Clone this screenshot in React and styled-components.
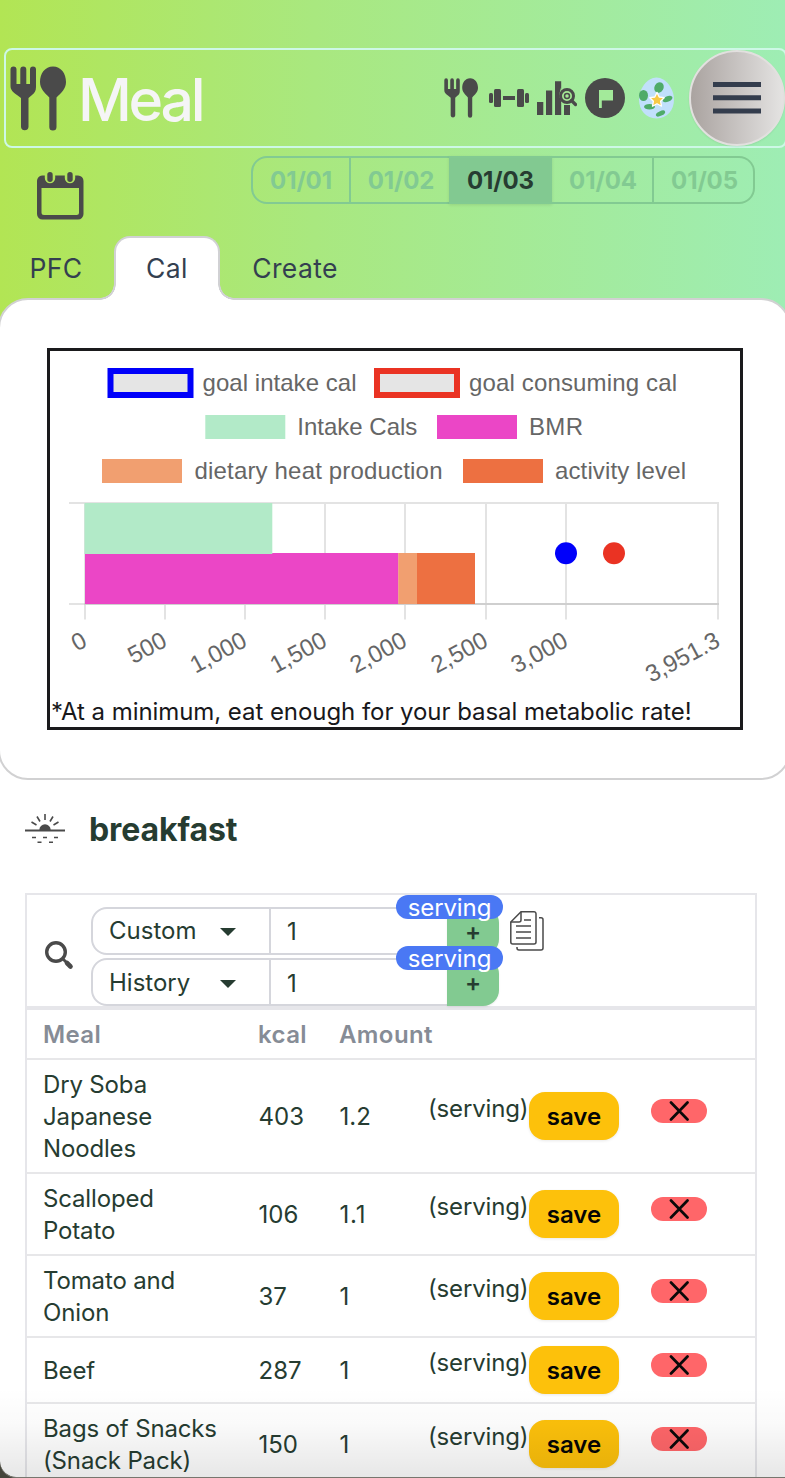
import React from "react";
import styled, { createGlobalStyle } from "styled-components";

const GlobalStyle = createGlobalStyle`
  *, *::before, *::after { box-sizing: border-box; }
  html, body { margin: 0; padding: 0; background: #fff; }
  body { font-family: Inter, "Liberation Sans", sans-serif; }
  button, input { font: inherit; margin: 0; border: 0; padding: 0; }
  svg { display: block; flex: none; }
`;

const INK = "#263c31";
const ICON = "#4a4a4a";

const Page = styled.main`
  position: relative;
  width: 785px;
  height: 1478px;
  overflow: hidden;
  background: #fff;
  color: ${INK};
  font-size: 24px;
  line-height: 32px;
`;

const Hero = styled.div`
  height: 350px;
  padding-top: 48px;
  background: linear-gradient(to right, #b2e554 0%, #a9e87f 40%, #9eedb4 100%);
`;

const Header = styled.header`
  display: flex;
  align-items: center;
  width: 783px;
  height: 100px;
  margin-left: 4px;
  padding-left: 4px;
  border: 2px solid #cdf8e6;
  border-radius: 8px;
`;

const Title = styled.h1`
  flex: 1;
  margin: 3px 0 0 12px;
  color: #f5f5f6;
  font-size: 59px;
  font-weight: 500;
  line-height: 60px;
  letter-spacing: -3.3px;
`;

const IconNav = styled.nav`
  display: flex;
  align-items: center;
  gap: 8px;
  margin-right: 12px;

  & > :first-child {
    margin-right: 3px;
  }
`;

const MenuButton = styled.button`
  display: grid;
  place-items: center;
  width: 96px;
  height: 96px;
  border: 2px solid #e2e0df;
  border-radius: 50%;
  background: linear-gradient(to right, #aaa3a0, #e4e3e2);
  box-shadow: 0 1px 2px rgba(0, 0, 0, 0.08);
`;

const DateBar = styled.div`
  display: flex;
  justify-content: space-between;
  padding: 8px 30px 0 36px;
  height: 88px;
`;

const CalendarSlot = styled.div`
  padding-top: 15px;
`;

const Dates = styled.div`
  display: flex;
  height: 48px;
`;

const DateButton = styled.button`
  width: ${(p) => p.$width}px;
  height: 48px;
  padding: 2px 0 0 ${(p) => (p.$first ? 0 : 2)}px;
  border: 2px solid #82ca92;
  border-left-width: ${(p) => (p.$first ? 2 : 0)}px;
  border-right-width: ${(p) => (p.$flush ? 0 : 2)}px;
  border-radius: ${(p) => (p.$first ? "16px 0 0 16px" : p.$last ? "0 16px 16px 0" : 0)};
  background: ${(p) => (p.$active ? "#82c991" : "transparent")};
  box-shadow: ${(p) => (p.$active ? "0 1px 3px rgba(0,0,0,.1)" : "none")};
  color: ${(p) => (p.$active ? INK : "#82ca92")};
  font-weight: 650;
  letter-spacing: -0.1px;
  text-align: center;
`;

const Tabs = styled.div`
  position: relative;
  z-index: 1;
  display: flex;
  height: 64px;
`;

const Tab = styled.button`
  position: relative;
  width: ${(p) => p.$width}px;
  height: 64px;
  border: ${(p) => (p.$active ? "2px solid #d1d1d4" : "0")};
  border-bottom: 0;
  border-radius: 16px 16px 0 0;
  background: ${(p) => (p.$active ? "#fff" : "transparent")};
  color: #343f50;
  font-size: 26.5px;
  letter-spacing: 0.4px;
  padding: ${(p) => (p.$active ? "0 0 2px" : "0 2px 1px 0")};

  &::before,
  &::after {
    content: "";
    display: ${(p) => (p.$active ? "block" : "none")};
    position: absolute;
    bottom: 0;
    width: 16px;
    height: 16px;
  }
  &::before {
    left: -16px;
    background: radial-gradient(circle at 0 0, transparent 13.5px, #d1d1d4 14px, #d1d1d4 15.5px, #fff 16px);
  }
  &::after {
    right: -16px;
    background: radial-gradient(circle at 100% 0, transparent 13.5px, #d1d1d4 14px, #d1d1d4 15.5px, #fff 16px);
  }
`;

const Panel = styled.section`
  width: 793px;
  height: 482px;
  margin: -52px 0 0 -2px;
  padding: 48px 0 0 47px;
  border: 2px solid #d1d1d2;
  border-radius: 30px;
  background: #fff;
`;

const ChartFrame = styled.div`
  width: 696px;
  height: 382px;
  border: 3px solid #1a1a1c;
  background: #fff;
`;

const ChartNote = styled.p`
  margin: 0 0 0 1px;
  color: #18181b;
  white-space: nowrap;
  letter-spacing: -0.06px;
`;

const MealHeading = styled.div`
  display: flex;
  align-items: center;
  gap: 24px;
  height: 98px;
  padding: 0 0 0 25px;
`;

const MealTitle = styled.h2`
  margin: 1px 0 0;
  font-size: 32px;
  font-weight: 700;
  line-height: 40px;
  letter-spacing: -0.1px;
`;

const MealCard = styled.section`
  width: 732px;
  margin: 15px 0 0 25px;
  border: 2px solid #e6e6ea;
`;

const AddArea = styled.div`
  display: flex;
  height: 115px;
  padding-top: 12px;
  border-bottom: 4px solid #e6e6ea;
`;

const SearchSlot = styled.div`
  width: 64px;
  padding: 34px 0 0 18px;
`;

const JoinStack = styled.div`
  display: flex;
  flex-direction: column;
  gap: 3px;
  width: 408px;
`;

const Join = styled.div`
  position: relative;
  display: flex;
  height: 48px;
`;

const Select = styled.div`
  display: flex;
  align-items: center;
  justify-content: space-between;
  width: 180px;
  padding: ${(p) => p.$drop}px 33px 0 16px;
  border: 2px solid #d5d6dc;
  border-radius: 16px 0 0 16px;
`;

const Caret = styled.span`
  border: 8px solid transparent;
  border-top-color: ${INK};
  border-bottom: 0;
  margin-top: 2px;
`;

const CountInput = styled.input`
  width: 176px;
  height: 48px;
  padding: ${(p) => p.$drop}px 0 0 16px;
  border: solid #d5d6dc;
  border-width: 2px 0;
  background: #fff;
  color: ${INK};
  outline: 0;
`;

const PlusButton = styled.button`
  width: 52px;
  height: 48px;
  border-radius: 0 16px 16px 0;
  background: #82ca91;
  color: ${INK};
  font-weight: 600;
  line-height: 20px;
  padding-top: 1px;
  box-shadow: 0 1px 2px rgba(0, 0, 0, 0.08);
`;

const UnitBadge = styled.span`
  position: absolute;
  top: -12px;
  right: -4px;
  width: 107px;
  height: 24px;
  border-radius: 12px;
  background: #4a78f4;
  color: #fff;
  line-height: 26px;
  letter-spacing: -0.1px;
  text-align: center;
`;

const CopySlot = styled.div`
  padding: 4px 0 0 11px;
`;

const TableRow = styled.div`
  display: grid;
  grid-template-columns: 215px 81px 89px 101px 122px 1fr;
  align-items: center;
  height: ${(p) => p.$height}px;
  padding-left: 16px;
  border-bottom: 2px solid #e7e7e9;
`;

const HeadCell = styled.span`
  padding-top: 2px;
  color: #868c96;
  font-weight: 600;
  letter-spacing: 0.4px;
`;

const Cell = styled.span`
  letter-spacing: -0.15px;
  padding-top: 1px;
`;

const NumberCell = styled(Cell)`
  padding-left: 0.5px;
  letter-spacing: ${(p) => p.$spacing || 0}px;
`;

const NameLine = styled.span`
  display: block;
  white-space: nowrap;
`;

const Unit = styled.span`
  padding-bottom: 15px;
  white-space: nowrap;
  letter-spacing: -0.15px;
`;

const SaveButton = styled.button`
  width: 90px;
  height: 48px;
  border-radius: 16px;
  background: #fdc10b;
  box-shadow: 0 1px 3px rgba(0, 0, 0, 0.09);
  color: #050505;
  font-weight: 600;
  padding-top: 1px;
`;

const RemoveButton = styled.button`
  display: grid;
  place-items: center;
  width: 56px;
  height: 24px;
  margin-bottom: 10px;
  border-radius: 12px;
  background: #ff6669;
`;

const BottomShade = styled.div`
  position: absolute;
  inset: auto 0 1px 0;
  height: 90px;
  border-bottom-left-radius: 16px;
  background: linear-gradient(rgba(0, 0, 0, 0), rgba(0, 0, 0, 0.02) 40%, rgba(0, 0, 0, 0.095));
  box-shadow: 0 1px 0 #77766e, -4px 6px 0 4px #44443a;
  pointer-events: none;
`;

const Cutlery = ({ width, height }) => (
  <svg width={width} height={height} viewBox="0 0 56 65" preserveAspectRatio="none" fill={ICON}>
    <path d="M0.5 3.5a3 3 0 0 1 6 0V18h3.8V3.5a3 3 0 0 1 6 0V18h3.7V3.5a3 3 0 0 1 6 0V21c0 4-1.500 6-4 8l-3.500 3v29a3.800 3.800 0 0 1-7.500 0V32L7 29c-4-3-6.500-5-6.500-9Z" />
    <path d="M43 0.500c-8 0-13 7-13 15.500 0 7 5 11 9.300 15.500V61a3.600 3.600 0 0 0 7.200 0V31.500C51 27 56 23 56 16 56 7.500 51 .5 43 .5Z" />
  </svg>
);

const Dumbbell = () => (
  <svg width="40" height="40" viewBox="0 0 40 40" fill={ICON}>
    <rect x="0" y="15" width="4" height="10" rx="1.500" />
    <rect x="5" y="11" width="7" height="18" rx="1.500" />
    <rect x="14" y="18" width="12" height="4" />
    <rect x="28" y="11" width="7" height="18" rx="1.500" />
    <rect x="36" y="15" width="4" height="10" rx="1.500" />
  </svg>
);

const Stats = () => (
  <svg width="40" height="40" viewBox="0 0 40 40">
    <path fill={ICON} d="M0 24h6.300v13H0zM9 12.500h6.200V37H9zM18 3.200h6.200V37H18zM27 27h6v10h-6z" />
    <path d="M24 9.500l-2 8 3 8 4 1z" fill="#a4ea94" />
    <circle cx="30" cy="18" r="6.500" fill="#a4ea94" stroke={ICON} strokeWidth="3" />
    <circle cx="30" cy="18" r="2.500" fill="none" stroke={ICON} strokeWidth="1.500" />
    <path d="M34.500 22.500l4 4" stroke={ICON} strokeWidth="3.200" strokeLinecap="round" />
  </svg>
);

const Flag = () => (
  <svg width="40" height="40" viewBox="0 0 40 40">
    <circle cx="20" cy="20" r="20" fill={ICON} />
    <path d="M14 12h14v10.500H16.800V30H14z" fill="#a3ea9a" />
  </svg>
);

const Egg = () => (
  <svg width="44" height="42" viewBox="0 0 44 42">
    <path d="M23.500.5C33 .5 41 12 41 22.500S34 41.500 23.500 41.500 6 33 6 22.500 14 .5 23.500.5Z" fill="#c1e0fb" />
    <g fill="#4fab68">
      <ellipse cx="26" cy="10.500" rx="4.500" ry="5.500" transform="rotate(30 26 10.500)" />
      <ellipse cx="10.500" cy="18.500" rx="4.500" ry="5.500" />
      <ellipse cx="34.500" cy="22" rx="5.200" ry="2.800" transform="rotate(-22 34.500 22)" />
      <ellipse cx="16.500" cy="29.800" rx="5.500" ry="2.800" />
      <ellipse cx="27.500" cy="36.500" rx="5" ry="2.300" transform="rotate(-25 27.500 36.500)" />
    </g>
    <path d="M24 15.400l2.200 4.600 5 .7-3.600 3.500.9 5-4.500-2.400-4.500 2.400.9-5-3.600-3.500 5-.7z" fill="#f7c948" stroke="#fff" strokeWidth="1.300" strokeLinejoin="round" />
  </svg>
);

const MenuLines = () => (
  <svg width="48" height="34" viewBox="0 0 48 34" fill="#343d4d">
    <path d="M0 1h48v5H0zM0 14.300h48v5H0zM0 27.600h48v5H0z" />
  </svg>
);

const Calendar = () => (
  <svg width="48" height="49" viewBox="0 0 48 49" fill={ICON}>
    <path fillRule="evenodd" d="M6 4.500h2.800v2.500a5.200 5.200 0 0 0 10.400 0v-2.500h9.600v2.500a5.200 5.200 0 0 0 10.400 0v-2.500H42a5.500 5.500 0 0 1 5.500 5.500v33a5.500 5.500 0 0 1-5.500 5.500H6.500A5.500 5.500 0 0 1 1 43V10a5.500 5.500 0 0 1 5-5.500ZM5.500 17v24.500q0 2.500 2.500 2.500h32.500q2.500 0 2.500-2.500V17Z" />
    <rect x="11.300" y="1" width="5.400" height="10" rx="2.700" />
    <rect x="31.300" y="1" width="5.400" height="10" rx="2.700" />
  </svg>
);

const Sunrise = () => (
  <svg width="40" height="32" viewBox="0 0 40 32" stroke={ICON} fill="none" strokeWidth="1.600">
    <path d="M0 17.500h40" strokeWidth="2" />
    <path d="M14.300 17a5.700 5.700 0 0 1 11.400 0z" fill={ICON} stroke="none" />
    <path d="M20 1v6M12 3.500l3 5M28 3.500l-3 5M6.500 9l5 3M33.500 9l-5 3" />
    <path d="M7 24.500h4M18 24.500h4M29 24.500h4M12.500 29.300h4M24 29.300h4" />
  </svg>
);

const Search = () => (
  <svg width="29" height="29" viewBox="0 0 29 29" stroke={ICON} fill="none">
    <circle cx="11" cy="11" r="9.300" strokeWidth="3.400" />
    <path d="M18 18l4 4" strokeWidth="2.800" />
    <path d="M22 22l3.500 3.500" strokeWidth="4.600" strokeLinecap="round" />
  </svg>
);

const Copy = () => (
  <svg width="34" height="40" viewBox="0 0 34 40" stroke={ICON} fill="none" strokeWidth="1.500" strokeLinejoin="round">
    <path d="M11 .8h13a2 2 0 0 1 2 2V31a2 2 0 0 1-2 2H2.800a2 2 0 0 1-2-2V11z" />
    <path d="M11 .8V9a2 2 0 0 1-2 2H.8M29 6.800h2a2 2 0 0 1 2 2V37a2 2 0 0 1-2 2H9a2 2 0 0 1-2-2v-1" />
    <path d="M14 9h7M6 15h15M6 21h15M6 27h15" />
  </svg>
);

const Cross = () => (
  <svg width="20" height="20" viewBox="0 0 20 20">
    <path d="M2 1.500l16.500 17M18.500 1.500L2 18.500" stroke="#090909" strokeWidth="2.700" strokeLinecap="round" />
  </svg>
);

const legend = [
  { x: 110.5, y: 371, label: "goal intake cal", tx: 202.5, width: 154, stroke: "#0000fa" },
  { x: 377, y: 371, label: "goal consuming cal", tx: 469, width: 208, stroke: "#ea3323" },
  { x: 205.3, y: 415, label: "Intake Cals", tx: 297.3, width: 120, fill: "#b2eac8" },
  { x: 437, y: 415, label: "BMR", tx: 529, width: 54, fill: "#eb46c6" },
  { x: 102, y: 459, label: "dietary heat production", tx: 194.5, width: 248, fill: "#f19f70" },
  { x: 463, y: 459, label: "activity level", tx: 555, width: 131, fill: "#ed7041" },
];

const ticks = [
  [85, "0"],
  [165, "500"],
  [245, "1,000"],
  [325, "1,500"],
  [405, "2,000"],
  [486, "2,500"],
  [566, "3,000"],
  [718, "3,951.3"],
];

const CalorieChart = () => (
  <svg width="690" height="345" viewBox="50 351 690 345" fontFamily="'Liberation Sans', Arial, sans-serif" fontSize="24" fill="#666">
    {legend.map((l) => (
      <g key={l.label}>
        {l.stroke ? (
          <rect x={l.x} y={l.y} width="80" height="24" fill="#e5e5e5" stroke={l.stroke} strokeWidth="6" />
        ) : (
          <rect x={l.x} y={l.y} width="80" height="24" fill={l.fill} />
        )}
        <text x={l.tx} y={l.y + 20} textLength={l.width}>{l.label}</text>
      </g>
    ))}
    <path d="M69 503H719M69 604H85" stroke="#e3e3e3" strokeWidth="2" />
    {ticks.map(([x, label]) => (
      <g key={label}>
        <path d={`M${x} 503V619.500`} stroke="#e3e3e3" strokeWidth="2" />
        <text x={x + 3.6} y="645.500" textAnchor="end" transform={`rotate(-28 ${x + 3.6} 645.500)`}>{label}</text>
      </g>
    ))}
    <path d="M84 604H719" stroke="#cfcfcf" strokeWidth="2" />
    <rect x="85" y="553" width="313.500" height="51" fill="#eb46c6" />
    <rect x="398.300" y="553" width="19" height="51" fill="#f19f70" />
    <rect x="417" y="553" width="58" height="51" fill="#ed7041" />
    <rect x="84.500" y="503" width="187.800" height="51" fill="#b2eac8" />
    <circle cx="566" cy="553.300" r="11" fill="#0000fa" />
    <circle cx="614" cy="553.300" r="11" fill="#ea3323" />
  </svg>
);

const dates = [
  ["01/01", 100],
  ["01/02", 98],
  ["01/03", 103],
  ["01/04", 102],
  ["01/05", 101],
];

const meals = [
  { name: ["Dry Soba", "Japanese", "Noodles"], kcal: 403, amount: "1.2", height: 114 },
  { name: ["Scalloped", "Potato"], kcal: 106, amount: "1.1", height: 82 },
  { name: ["Tomato and", "Onion"], kcal: 37, amount: "1", height: 82 },
  { name: ["Beef"], kcal: 287, amount: "1", height: 66 },
  { name: ["Bags of Snacks", "(Snack Pack)"], kcal: 150, amount: "1", height: 82 },
];

const AddRow = ({ source, drop = 0 }) => (
  <Join>
    <Select $drop={drop}>{source}<Caret /></Select>
    <CountInput $drop={drop} defaultValue="1" aria-label={`${source} servings`} />
    <PlusButton>+</PlusButton>
    <UnitBadge>serving</UnitBadge>
  </Join>
);

export default function App() {
  return (
    <Page>
      <GlobalStyle />
      <Hero>
        <Header>
          <Cutlery width={56} height={65} />
          <Title>Meal</Title>
          <IconNav>
            <Cutlery width={34} height={40} />
            <Dumbbell />
            <Stats />
            <Flag />
            <Egg />
          </IconNav>
          <MenuButton aria-label="Menu"><MenuLines /></MenuButton>
        </Header>
        <DateBar>
          <CalendarSlot><Calendar /></CalendarSlot>
          <Dates>
            {dates.map(([label, width], i) => (
              <DateButton key={label} $width={width} $first={i === 0} $last={i === 4} $active={i === 2} $flush={i === 1}>
                {label}
              </DateButton>
            ))}
          </Dates>
        </DateBar>
        <Tabs>
          <Tab $width={114}>PFC</Tab>
          <Tab $width={106} $active>Cal</Tab>
          <Tab $width={152}>Create</Tab>
        </Tabs>
      </Hero>
      <Panel>
        <ChartFrame>
          <CalorieChart />
          <ChartNote>*At a minimum, eat enough for your basal metabolic rate!</ChartNote>
        </ChartFrame>
      </Panel>
      <MealHeading>
        <Sunrise />
        <MealTitle>breakfast</MealTitle>
      </MealHeading>
      <MealCard>
        <AddArea>
          <SearchSlot><Search /></SearchSlot>
          <JoinStack>
            <AddRow source="Custom" />
            <AddRow source="History" drop={2} />
          </JoinStack>
          <CopySlot><Copy /></CopySlot>
        </AddArea>
        <TableRow $height={50}>
          <HeadCell>Meal</HeadCell>
          <HeadCell>kcal</HeadCell>
          <HeadCell>Amount</HeadCell>
        </TableRow>
        {meals.map((m) => (
          <TableRow key={m.name[0]} $height={m.height}>
            <Cell>{m.name.map((line) => <NameLine key={line}>{line}</NameLine>)}</Cell>
            <NumberCell>{m.kcal}</NumberCell>
            <NumberCell $spacing={m.amount === "1.1" ? 0.8 : 0}>{m.amount}</NumberCell>
            <Unit>(serving)</Unit>
            <SaveButton>save</SaveButton>
            <RemoveButton aria-label="Remove"><Cross /></RemoveButton>
          </TableRow>
        ))}
      </MealCard>
      <BottomShade />
    </Page>
  );
}
